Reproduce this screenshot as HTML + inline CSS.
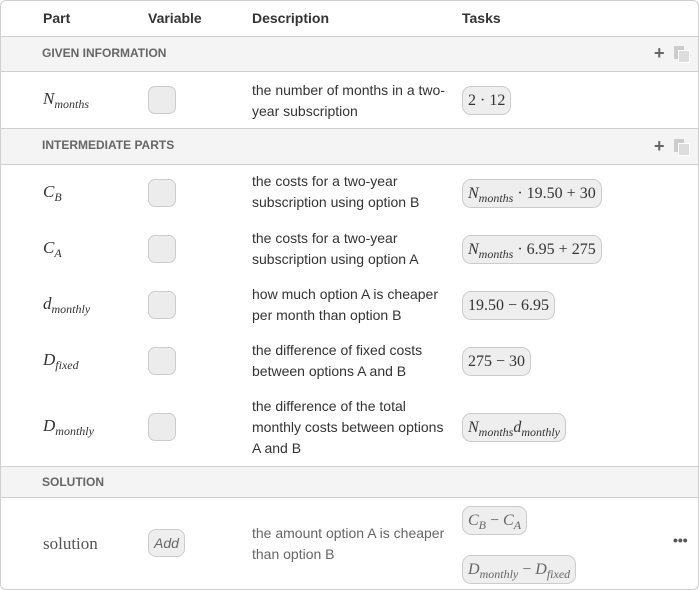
<!DOCTYPE html>
<html><head><style>
body{margin:0;width:699px;height:590px;background:#fff;font-family:"Liberation Sans",sans-serif;overflow:hidden}
.wrap{position:absolute;left:0;top:0;width:697px;height:588px;border:1px solid #d0d0d0;border-radius:6px;overflow:hidden}
.in{position:absolute;left:0;top:-1px;width:697px;height:590px}
.a{position:absolute}
.h{font-weight:bold;font-size:14px;color:#333;top:10px}
.sec{position:absolute;left:0;width:697px;background:#f4f4f4;border-top:1px solid #cfcfcf;border-bottom:1px solid #cfcfcf}
.sec span{position:absolute;left:41px;font-size:12px;font-weight:bold;color:#666}
.m{font-family:"Liberation Serif",serif;font-style:italic;font-size:17px;color:#333}
.m sub{font-size:12px;vertical-align:-4px}
.box{position:absolute;left:147px;width:26px;height:26px;border:1px solid #ccc;background:#ececec;border-radius:7px}
.d{position:absolute;left:251px;font-size:14px;line-height:21px;color:#333;width:200px}
.p{position:absolute;left:461px;height:27px;line-height:27px;padding:0 5px;border:1px solid #ccc;background:#eee;border-radius:9px;font-family:"Liberation Serif",serif;font-size:16px;color:#333;white-space:nowrap}
.p i sub{font-size:12px;vertical-align:-4px}
.ic{position:absolute;left:653px;font-size:18px;font-weight:bold;color:#666}
.cp{position:absolute;left:673px;width:10px;height:13px;background:#ccc}
.cp:after{content:"";position:absolute;left:4px;top:4px;width:10px;height:11px;background:#ddd;border:1px solid #fff}
</style></head><body><div class="wrap"><div class="in">
<div class="a h" style="left:42px">Part</div>
<div class="a h" style="left:147px">Variable</div>
<div class="a h" style="left:251px">Description</div>
<div class="a h" style="left:461px">Tasks</div>

<div class="sec" style="top:36px;height:34px"><span style="top:9px">GIVEN INFORMATION</span></div>
<div class="ic" style="top:43px">+</div><div class="cp" style="top:46px"></div>
<div class="a m" style="left:42px;top:89px">N<sub>months</sub></div>
<div class="box" style="top:86px"></div>
<div class="d" style="top:80px">the number of months in a two-year subscription</div>
<div class="p" style="top:86px">2 · 12</div>

<div class="sec" style="top:128px;height:35px"><span style="top:9px">INTERMEDIATE PARTS</span></div>
<div class="ic" style="top:136px">+</div><div class="cp" style="top:139px"></div>

<div class="a m" style="left:42px;top:182px">C<sub>B</sub></div>
<div class="box" style="top:179px"></div>
<div class="d" style="top:171px">the costs for a two-year subscription using option B</div>
<div class="p" style="top:179px"><i>N<sub>months</sub></i> · 19.50 + 30</div>

<div class="a m" style="left:42px;top:238px">C<sub>A</sub></div>
<div class="box" style="top:235px"></div>
<div class="d" style="top:228px">the costs for a two-year subscription using option A</div>
<div class="p" style="top:235px"><i>N<sub>months</sub></i> · 6.95 + 275</div>

<div class="a m" style="left:42px;top:294px">d<sub>monthly</sub></div>
<div class="box" style="top:291px"></div>
<div class="d" style="top:284px">how much option A is cheaper per month than option B</div>
<div class="p" style="top:291px">19.50 − 6.95</div>

<div class="a m" style="left:42px;top:350px">D<sub>fixed</sub></div>
<div class="box" style="top:347px"></div>
<div class="d" style="top:340px">the difference of fixed costs between options A and B</div>
<div class="p" style="top:347px">275 − 30</div>

<div class="a m" style="left:42px;top:416px">D<sub>monthly</sub></div>
<div class="box" style="top:413px"></div>
<div class="d" style="top:396px">the difference of the total monthly costs between options A and B</div>
<div class="p" style="top:413px"><i>N<sub>months</sub>d<sub>monthly</sub></i></div>

<div class="sec" style="top:466px;height:30px"><span style="top:8px">SOLUTION</span></div>
<div class="a" style="left:42px;top:534px;font-family:'Liberation Serif',serif;font-size:17px;color:#555">solution</div>
<div class="a" style="left:147px;top:529px;height:26px;line-height:26px;padding:0 5px;border:1px solid #ccc;background:#eee;border-radius:8px;font-style:italic;font-size:14px;color:#666">Add</div>
<div class="d" style="top:523px;color:#666">the amount option A is cheaper than option B</div>
<div class="p" style="top:506px;color:#666"><i>C<sub>B</sub></i> − <i>C<sub>A</sub></i></div>
<div class="p" style="top:555px;color:#666"><i>D<sub>monthly</sub></i> − <i>D<sub>fixed</sub></i></div>
<div class="a" style="left:672px;top:532px;font-size:14px;font-weight:bold;color:#555">•••</div>
</div></div></body></html>
